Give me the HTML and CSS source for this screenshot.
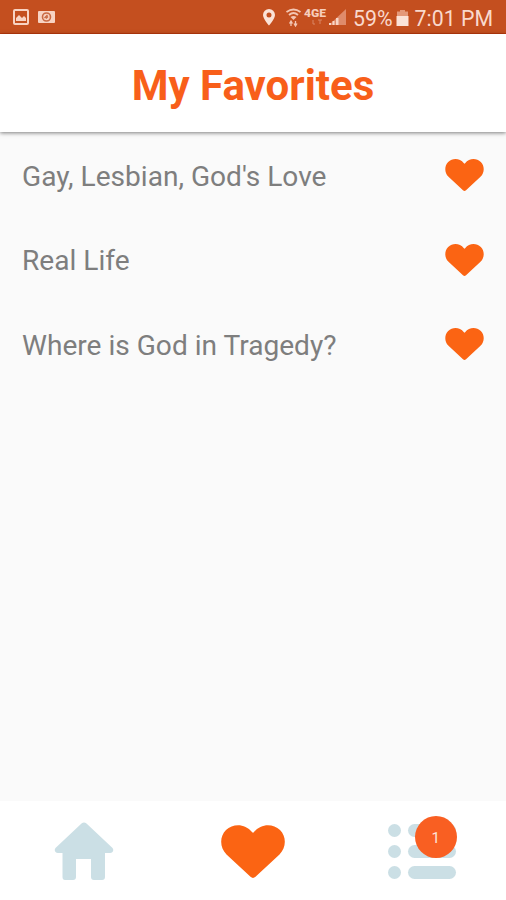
FILE: index.html
```html
<!DOCTYPE html>
<html lang="en">
<head>
  <meta charset="UTF-8">
  <title>My Favorites</title>
  <link rel="stylesheet" href="styles.css">
</head>
<body>
  <svg width="0" height="0" class="defs">
    <symbol id="heart" viewBox="0 0 64 53">
      <path d="M29.5 51.8 L5.5 29.5 C-1.5 22.5 -1.5 11.5 5 5 C12 -1.8 24 -1.8 31 7 Q32 8.500 33 7 C40 -1.8 52 -1.8 59 5 C65.5 11.5 65.5 22.5 58.5 29.5 L34.5 51.8 Q32 54 29.5 51.8 Z"/>
    </symbol>
  </svg>

  <div class="status-bar">
    <div class="status-left">
      <svg width="48" height="18" viewBox="0 0 48 18">
        <rect x="2" y="2" width="14" height="14" rx="1" fill="none" stroke="#f8d3c3" stroke-width="2"/>
        <path d="M4 13V10l3-3 3 3 2-2 2 2v3z" fill="#f8d3c3"/>
        <rect x="26" y="3" width="17" height="12" rx="1" fill="#f8d3c3"/>
        <circle cx="34.5" cy="9" r="4" fill="none" stroke="#c96a44" stroke-width="1.6"/>
        <path d="M32.5 10l3-3M34 10.5l2-2" stroke="#c96a44" stroke-width="1.3"/>
      </svg>
    </div>
    <div class="status-right">
      <svg class="signals" width="86" height="20" viewBox="0 0 86 20">
        <path fill="#fbe2d7" fill-rule="evenodd" d="M7 2a6 6 0 0 0-6 6c0 4 6 10.5 6 10.5S13 12 13 8A6 6 0 0 0 7 2zM7 5.5a2.500 2.500 0 1 1 0 5 2.500 2.500 0 0 1 0-5z"/>
        <g fill="none" stroke="#f3c6b3" stroke-width="1.8">
          <path d="M24.5 5q7-5 14 0M27 8q4.500-4 9 0"/>
        </g>
        <path d="M28.5 10q3-2 6 0l-3 3z" fill="#f3c6b3"/>
        <path d="M29 19v-4M27.5 16.5L29 14l1.5 2.5M33.5 14v4M32 16.5l1.5 2.5 1.5-2.5" fill="none" stroke="#f3c6b3" stroke-width="1.3"/>
        <text class="network" x="42" y="10" textLength="22" lengthAdjust="spacingAndGlyphs">4GE</text>
        <path d="M51 13v4h2M56 13h4M58 13v4" fill="none" stroke="#d98766" stroke-width="1"/>
        <path d="M67 18L84 2v16z" fill="#df8b6b"/>
        <path d="M67 18v-2h2v2zM70.5 18v-4h2v4zM74 18v-7h2.500v7z" fill="#f8d5c5"/>
      </svg>
      <span class="battery-level">59%</span>
      <svg class="battery" width="13" height="18" viewBox="0 0 13 18">
        <path d="M1 7V2.5h3V1h5v1.500h3V7z" fill="#e49879"/>
        <path d="M0.5 7h12v10h-12z" fill="#fbe2d7"/>
      </svg>
      <span class="clock">7:01 PM</span>
    </div>
  </div>

  <header class="header">
    <h1>My Favorites</h1>
  </header>

  <ul class="favorites">
    <li><span>Gay, Lesbian, God's Love</span><svg class="heart"><use href="#heart"/></svg></li>
    <li><span>Real Life</span><svg class="heart"><use href="#heart"/></svg></li>
    <li><span>Where is God in Tragedy?</span><svg class="heart"><use href="#heart"/></svg></li>
  </ul>

  <nav class="tabs">
    <a class="tab">
      <svg class="home" width="60" height="58" viewBox="0 0 60 58">
        <path d="M27.5 1.5Q30 -0.5 32.5 1.5L58.5 26Q60 28 58.5 30 57.5 31 56 31H51V55Q51 58 48 58H40Q37 58 37 55V37H22V55Q22 58 19 58H11Q8.5 58 8.5 55V31H4Q2.5 31 1.5 30 0 28 1.5 26Z"/>
      </svg>
    </a>
    <a class="tab">
      <svg class="heart active"><use href="#heart"/></svg>
    </a>
    <a class="tab">
      <div class="list-icon">
        <i></i><b></b>
        <i></i><b></b>
        <i></i><b></b>
        <span class="badge">1</span>
      </div>
    </a>
  </nav>
</body>
</html>
```

FILE: styles.css
```css
* {
  box-sizing: border-box;
}
body {
  margin: 0;
  height: 900px;
  display: flex;
  flex-direction: column;
  background: #fafafa;
  font-family: Roboto, sans-serif;
  overflow: hidden;
}
.defs {
  position: absolute;
}
svg {
  display: block;
  flex: none;
}
.status-bar {
  height: 34px;
  flex: none;
  display: flex;
  justify-content: space-between;
  align-items: center;
  padding: 0 13px 0 12px;
  background: #c44f1f;
  border-bottom: 1px solid #bd3a0c;
  color: #f9d9cc;
  font-size: 21.3px;
  white-space: nowrap;
}
.status-right {
  display: flex;
  align-items: center;
}
.signals {
  margin-right: 5px;
}
.network {
  font-size: 10px;
  font-weight: 900;
  fill: #f6cdbb;
}
.battery-level,
.clock {
  line-height: 28px;
  padding-top: 4px;
}
.battery {
  margin: 2px 6px 0 3px;
}
.header {
  height: 98px;
  flex: none;
  display: flex;
  align-items: center;
  justify-content: center;
  background: #fff;
  box-shadow: 0 1px 4px rgba(0, 0, 0, 0.5);
}
.header h1 {
  margin: 5px 0 0;
  font-size: 42px;
  font-weight: bold;
  line-height: 48px;
  color: #f85f1a;
}
.favorites {
  flex: 1;
  margin: 0;
  padding: 1px 22px 0;
  list-style: none;
}
.favorites li {
  height: 84.5px;
  display: flex;
  align-items: center;
  justify-content: space-between;
  font-size: 28.1px;
  color: #7e7e7e;
}
.favorites span {
  padding-top: 2px;
}
.heart {
  width: 39px;
  height: 32px;
  fill: #fb6413;
}
.heart.active {
  width: 64px;
  height: 53px;
}
.tabs {
  height: 99px;
  flex: none;
  display: grid;
  grid-template-columns: repeat(3, 1fr);
  background: #fff;
}
.tab {
  display: flex;
  align-items: center;
  justify-content: center;
  padding-top: 2px;
}
.home {
  margin-bottom: 2px;
  fill: #cbdfe5;
}
.list-icon {
  position: relative;
  display: grid;
  grid-template-columns: 13px 48px;
  gap: 8px 7px;
}
.list-icon i,
.list-icon b {
  height: 13px;
  border-radius: 7px;
  background: #cbdfe5;
}
.badge {
  position: absolute;
  left: 27px;
  top: -8px;
  width: 42px;
  height: 42px;
  border-radius: 50%;
  background: #f95f22;
  color: #fde3d8;
  font-size: 15px;
  line-height: 44px;
  text-align: center;
}
```
